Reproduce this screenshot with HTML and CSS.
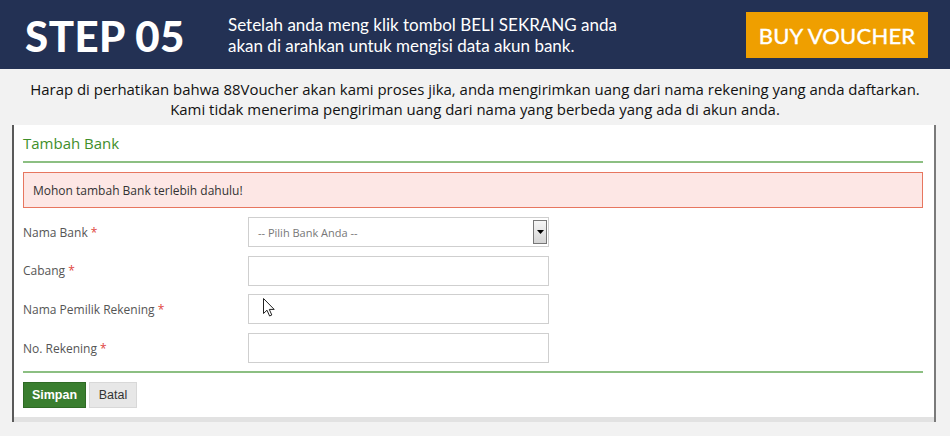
FILE: index.html
```html
<!DOCTYPE html>
<html lang="id">
<head>
<meta charset="utf-8">
<title>Step 05</title>
<link rel="stylesheet" href="styles.css">
</head>
<body>
<header class="top">
  <h1 class="step">STEP 05</h1>
  <p class="desc">Setelah anda meng klik tombol BELI SEKRANG anda<br>akan di arahkan untuk mengisi data akun bank.</p>
  <a class="buy">BUY VOUCHER</a>
</header>
<p class="notice">Harap di perhatikan bahwa 88Voucher akan kami proses jika, anda mengirimkan uang dari nama rekening yang anda daftarkan.<br>Kami tidak menerima pengiriman uang dari nama yang berbeda yang ada di akun anda.</p>
<section class="panel">
  <div class="inner">
    <h2 class="title">Tambah Bank</h2>
    <div class="alert">Mohon tambah Bank terlebih dahulu!</div>
    <div class="rows">
      <div class="row">
        <label class="label">Nama Bank <span class="req">*</span></label>
        <div class="select"><span class="ph">-- Pilih Bank Anda --</span><span class="arrow"><svg width="7" height="4" viewBox="0 0 7 4"><path d="M0 0H7L3.5 4Z" fill="#000"/></svg></span></div>
      </div>
      <div class="row">
        <label class="label">Cabang <span class="req">*</span></label>
        <div class="input"></div>
      </div>
      <div class="row">
        <label class="label">Nama Pemilik Rekening <span class="req">*</span></label>
        <div class="input cursor-host">
          <svg class="cursor" width="12" height="19" viewBox="0 0 12 19"><path d="M0.5 0.5V15.5L4 12.2L6.6 18L8.8 17L6.3 11.4H11.2Z" fill="#fff" stroke="#222" stroke-width="1" stroke-linejoin="round"/></svg>
        </div>
      </div>
      <div class="row">
        <label class="label">No. Rekening <span class="req">*</span></label>
        <div class="input"></div>
      </div>
    </div>
    <div class="actions">
      <button class="btn save">Simpan</button>
      <button class="btn cancel">Batal</button>
    </div>
  </div>
</section>
</body>
</html>
```
FILE: styles.css
```css
* { box-sizing: border-box; }
html, body { margin: 0; padding: 0; }
body {
  background: #f2f2f2;
  width: 950px;
  height: 436px;
  overflow: hidden;
  font-family: "Open Sans", "Liberation Sans", sans-serif;
}
.top {
  height: 69px;
  background: #233154;
  display: flex;
  align-items: center;
  padding-left: 25px;
}
.step {
  margin: 0;
  font-family: Lato, sans-serif;
  font-weight: 900;
  font-size: 42px;
  color: #fff;
  letter-spacing: 0.5px;
  width: 203px;
  line-height: 1;
  padding-top: 2px;
}
.desc {
  margin: 0;
  font-family: Lato, sans-serif;
  font-size: 17px;
  line-height: 21px;
  color: #fff;
  padding-top: 1px;
}
.buy {
  margin-left: auto;
  margin-right: 22px;
  width: 182px;
  height: 46px;
  background: #ef9f00;
  color: #fff;
  font-family: Lato, sans-serif;
  font-size: 22px;
  font-weight: 400;
  display: flex;
  align-items: center;
  justify-content: center;
  letter-spacing: 0.2px;
  padding-top: 1px;
  -webkit-text-stroke: 0.4px #fff;
}
.notice {
  margin: 0;
  height: 56px;
  padding-top: 11px;
  text-align: center;
  font-size: 14.95px;
  line-height: 19.5px;
  color: #111;
}
.panel {
  margin: 0 14px 0 12px;
  border-left: 2px solid #5a5a5a;
  border-right: 2px solid #7a7a7a;
  background: #fff;
  height: 297px;
}
.inner {
  padding: 0 11px 0 9px;
  border-bottom: 5px solid #e2e2e2;
  height: 297px;
}
.title {
  margin: 0;
  padding: 8px 0 8px;
  font-size: 15px;
  line-height: 20px;
  font-weight: 400;
  color: #3f8f2b;
  border-bottom: 2px solid #8cbf82;
}
.alert {
  margin-top: 9px;
  height: 36px;
  border: 1px solid #e7765f;
  background: #fde7e5;
  color: #333;
  font-size: 12px;
  padding-left: 9px;
  display: flex;
  align-items: center;
}
.rows {
  display: flex;
  flex-direction: column;
  gap: 8.7px;
  margin-top: 9px;
  padding-bottom: 8px;
  border-bottom: 2px solid #8cbf82;
}
.row {
  display: flex;
  align-items: center;
  height: 30px;
}
.label {
  width: 225px;
  font-size: 12px;
  color: #555;
}
.req { color: #e0453e; }
.select, .input {
  width: 301px;
  height: 30px;
  border: 1px solid #cfcfcf;
  background: #fff;
}
.select {
  display: flex;
  align-items: center;
  padding: 0 1px 0 9px;
}
.ph {
  font-size: 11px;
  color: #777;
  flex: 1;
}
.arrow {
  width: 14px;
  height: 24px;
  border: 1px solid #777;
  background: linear-gradient(#f6f6f6, #d4d4d4);
  display: flex;
  align-items: center;
  justify-content: center;
}
.cursor-host { position: relative; }
.cursor { position: absolute; left: 14px; top: 3px; }
.actions {
  display: flex;
  gap: 3px;
  margin-top: 9px;
}
.btn {
  height: 26px;
  font-family: "Liberation Sans", Arial, sans-serif;
  font-size: 12.5px;
  padding: 0;
  border-radius: 0;
}
.save {
  width: 63px;
  background: #3a7e2f;
  border: 1px solid #2f6a25;
  color: #fff;
  font-weight: 700;
}
.cancel {
  width: 48px;
  background: #e7e7e7;
  border: 1px solid #d8d8d8;
  color: #333;
}
```
